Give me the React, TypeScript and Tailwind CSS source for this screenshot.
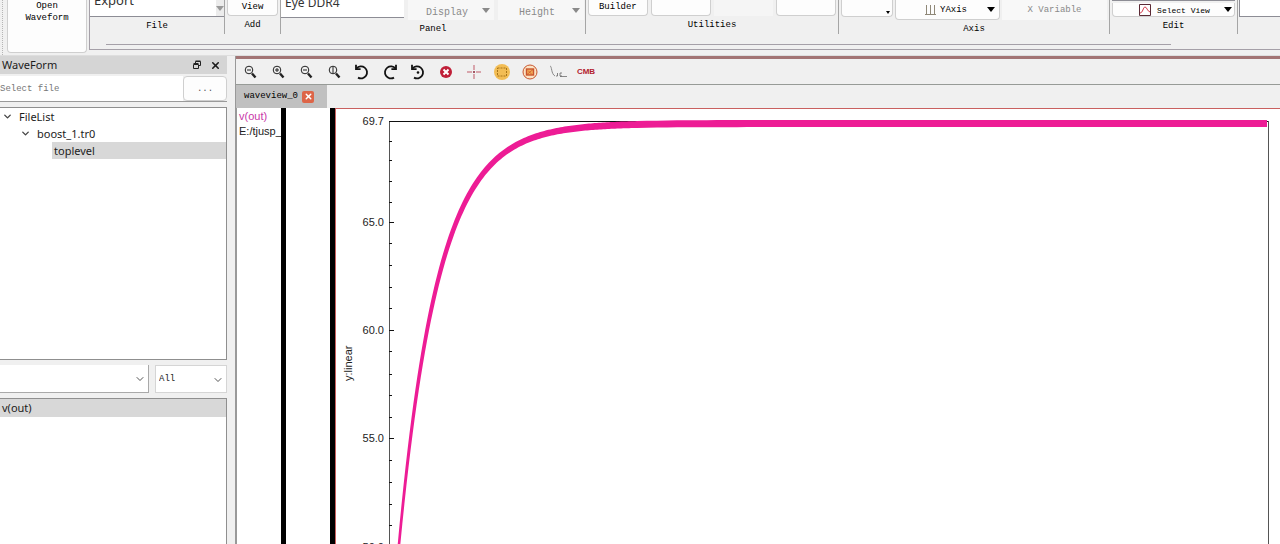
import type { ReactNode } from "react";
import { ChevronDown, X } from "lucide-react";

const MINOR_TICKS = [32, 51, 72, 93, 134, 156, 178, 199, 242, 265, 286, 308, 351, 373, 395, 416];

const MAJOR_TICKS = [
  { y: 12, label: "69.7" },
  { y: 113, label: "65.0" },
  { y: 221, label: "60.0" },
  { y: 329, label: "55.0" },
  { y: 438, label: "50.0" },
];

// Output voltage settling to its final value; the ripple band widens as it settles
const curvePath = () => {
  const upper: string[] = [];
  const lower: string[] = [];
  for (let x = 61; x <= 933; x += x < 301 ? 2 : 10) {
    const t = x - 63;
    const drop = 421 * Math.exp(-t / 39.5);
    const slope = -drop / 39.5;
    const len = Math.hypot(1, slope);
    const half = 1.3 + 2.3 * (1 - Math.exp(-Math.max(t, 0) / 90));
    const nx = (slope / len) * half;
    const ny = half / len;
    const y = 14.5 + drop;
    upper.push(`${(x + nx).toFixed(2)} ${(y - ny).toFixed(2)}`);
    lower.unshift(`${(x - nx).toFixed(2)} ${(y + ny).toFixed(2)}`);
  }
  return `M${upper.join("L")}L${lower.join("L")}Z`;
};

const CURVE = curvePath();

const Caret = ({ className = "" }: { className?: string }) => (
  <svg viewBox="0 0 8 5" className={`h-[5px] w-2 shrink-0 ${className}`} fill="currentColor">
    <path d="M0 0h8L4 5z" />
  </svg>
);

const Group = ({ label, className, children }: { label: string; className: string; children: ReactNode }) => (
  <section className={`flex h-[34px] shrink-0 flex-col border-r border-[#a5a5a5] ${className}`}>
    {children}
    <h2 className="text-center leading-[18px]">{label}</h2>
  </section>
);

const ribbonButton = "flex items-center justify-center rounded-b border border-t-0 border-[#cfcfcf] bg-[#fdfdfd]";

const Ribbon = () => (
  <header className="flex h-14 shrink-0 overflow-hidden border-b border-[#dedede] font-['Liberation_Mono',monospace] text-[9px] text-black">
    <div className="ml-0.5 w-px border-l border-dotted border-[#b5b5b5]" />
    <button className="ml-1 flex h-[53px] w-20 shrink-0 flex-col items-center rounded-b border border-t-0 border-[#cfcfcf] bg-[#fdfdfd] leading-3">
      <span>Open</span>
      <span>Waveform</span>
    </button>
    <div className="ml-0.5 flex h-[50px] min-w-0 flex-1 flex-col border-b border-l border-[#a5a0a8]">
      <div className="flex">
        <Group label="File" className="w-[135px]">
          <div className="flex h-[17px] items-end justify-between border-b border-[#8d8d95] bg-white">
            <span className="pb-2 pl-1 font-['Noto_Sans',sans-serif] text-[13px] leading-4 text-[#333]">Export</span>
            <span className="flex h-full w-2 items-center bg-[#ececec] text-[#9a9a9a]"><Caret /></span>
          </div>
        </Group>
        <Group label="Add" className="w-14">
          <button className={`${ribbonButton} mx-0.5 h-[17px]`}>View</button>
        </Group>
        <Group label="Panel" className="w-[305px]">
          <div className="flex h-5 gap-1">
            <div className="mb-0.5 flex w-[123px] items-end border-b border-[#8d8d95] bg-white pl-1">
              <span className="pb-1.5 font-['Noto_Sans',sans-serif] text-[12px] leading-4 text-[#333]">Eye DDR4</span>
            </div>
            <button disabled className="flex w-[86px] items-center justify-between bg-[#f7f7f7] pl-[18px] pr-1 text-[#8a8a8a]">
              <span className="pt-1 text-[10px]">Display</span><Caret />
            </button>
            <button disabled className="flex w-[86px] items-center justify-between bg-[#f7f7f7] pl-[21px] pr-1 text-[#8a8a8a]">
              <span className="pt-1 text-[10px]">Height</span><Caret />
            </button>
          </div>
        </Group>
        <Group label="Utilities" className="w-[253px]">
          <div className="flex h-[17px] gap-[3px] px-0.5">
            <button className={`${ribbonButton} w-[60px]`}>Builder</button>
            <button aria-label="Utility 1" className={`${ribbonButton} w-[60px]`} />
            <button disabled aria-label="Utility 2" className="w-[60px] bg-[#f5f5f5]" />
            <button aria-label="Utility 3" className={`${ribbonButton} w-[60px]`} />
          </div>
        </Group>
        <Group label="Axis" className="w-[271px]">
          <div className="flex h-5 items-start gap-0.5 px-0.5">
            <button aria-label="Axis options" className="flex h-[17px] w-[52px] items-end justify-end rounded-b border border-t-0 border-[#cfcfcf] bg-[#fdfdfd] p-0.5">
              <svg viewBox="0 0 4 3" className="h-[3px] w-1"><path d="M0 0h4L2 3z" /></svg>
            </button>
            <button className={`${ribbonButton} h-5 w-[105px] gap-1`}>
              <svg viewBox="0 0 12 12" className="ml-6 size-3" fill="#e4e0d6" stroke="#8f8878">
                <path d="M2.500 1v9M6.500 1v9M10.500 1v9M1 10.500h11" />
              </svg>
              <span className="pt-0.5">YAxis</span>
              <Caret className="ml-4" />
            </button>
            <button disabled className="h-5 flex-1 bg-[#f8f8f8] pt-0.5 text-[#8a8a8a]">X Variable</button>
          </div>
        </Group>
        <Group label="Edit" className="w-32">
          <div className="mx-0.5 flex h-[17px] flex-col border-t border-[#8d8d95]">
            <button className={`${ribbonButton} mt-0.5 h-3.5 gap-1.5 text-[8px]`}>
              <svg viewBox="0 0 12 12" className="ml-6 size-3" fill="#fff" stroke="#5b2a35">
                <path d="M.5.5h11v11H.5z" />
                <path d="M1 9c3 0 3-6 5-6s2 4 5 5" fill="none" stroke="#d43b4c" />
              </svg>
              <span className="pt-0.5">Select View</span>
              <Caret className="ml-2" />
            </button>
          </div>
        </Group>
        <div className="ml-px h-[17px] flex-1 border-b border-l border-[#8d8d95] bg-white" />
      </div>
      <hr className="ml-4 mr-[109px] mt-[10px] border-[#a5a0a8]" />
    </div>
  </header>
);

const Sidebar = () => (
  <aside className="flex w-[227px] shrink-0 flex-col font-['Noto_Sans',sans-serif] text-[11px] text-[#1c1c1c]">
    <div className="flex h-[18px] shrink-0 items-center bg-[#d5d5d5] pl-0.5 pr-1.5">
      <h2 className="flex-1">WaveForm</h2>
      <button aria-label="Float panel" className="mr-2">
        <svg viewBox="0 0 10 10" className="size-2.5" fill="none" stroke="#222">
          <path d="M3.500 3V1.500h5v4H7M1.500 4.500h5v4h-5zM1.500 3.500h5M3.500 1h5" />
        </svg>
      </button>
      <button aria-label="Close panel"><X size={11} strokeWidth={3.500} /></button>
    </div>
    <div className="mt-0.5 flex h-[26px] shrink-0 border-b border-[#9a9a9a]">
      <input
        aria-label="Select file"
        placeholder="Select file"
        className="min-w-0 flex-1 bg-white pt-0.5 font-['Liberation_Mono',monospace] text-[9px] placeholder:text-[#777]"
      />
      <button className="w-11 rounded border border-[#cfcfcf] bg-[#fdfdfd] pt-0.5 font-['Liberation_Mono',monospace] text-[9px] text-[#555]">...</button>
    </div>
    <ul className="mt-[5px] h-[253px] shrink-0 border border-l-0 border-[#8f8f8f] bg-white leading-[17px]">
      <li className="flex items-center gap-1.5 pl-0.5"><ChevronDown size={11} strokeWidth={3} className="text-[#444]" />FileList</li>
      <li className="flex items-center gap-1.5 pl-5"><ChevronDown size={11} strokeWidth={3} className="text-[#444]" />boost_1.tr0</li>
      <li className="ml-[52px] bg-[#d8d8d8] pl-0.5">toplevel</li>
    </ul>
    <div className="mt-[5px] flex h-7 shrink-0 gap-1.5 font-['Liberation_Mono',monospace] text-[9px]">
      <div className="relative min-w-0 flex-1 border-b border-r border-[#a9a9a9] bg-white">
        <select aria-label="Signal filter" className="size-full appearance-none pl-1"><option></option></select>
        <ChevronDown size={12} strokeWidth={1.500} className="pointer-events-none absolute right-0.5 top-2" />
      </div>
      <div className="relative w-[72px] border border-[#d5d5d5] bg-white">
        <select aria-label="Signal type" className="size-full appearance-none pl-[3px] pt-0.5"><option>All</option></select>
        <ChevronDown size={12} strokeWidth={1.500} className="pointer-events-none absolute right-0.5 top-2" />
      </div>
    </div>
    <ul className="mt-[5px] flex-1 border border-b-0 border-l-0 border-[#8f8f8f] bg-white">
      <li className="bg-[#d8d8d8] pl-0.5 leading-[18px]">v(out)</li>
    </ul>
  </aside>
);

const Magnifier = ({ mark }: { mark: string }) => (
  <svg viewBox="0 0 16 16" className="size-4" fill="none" stroke="#222">
    <circle cx="7" cy="6" r="3.800" />
    <path d={mark} strokeWidth="1" />
    <path d="M10 9.500l3.500 4" strokeWidth="2.400" />
  </svg>
);

const TurnArrow = ({ flip = false, dot = false }: { flip?: boolean; dot?: boolean }) => (
  <svg viewBox="0 0 18 18" className="size-[18px]" fill="none" stroke="#111" strokeWidth="1.800">
    <g transform={flip ? "translate(18 0) scale(-1 1)" : undefined}>
      <path d="M3.500 5.500A6 6 0 1 1 5 14.600" />
      <path d="M3 1.800v4.400h4.600" />
    </g>
    {dot && <circle cx="9" cy="9.500" r="1.300" fill="#111" stroke="none" />}
  </svg>
);

const TOOLS: { label: string; icon: ReactNode }[] = [
  { label: "Zoom out", icon: <Magnifier mark="M5 6h4" /> },
  { label: "Zoom in", icon: <Magnifier mark="M5 6h4M7 4v4" /> },
  { label: "Zoom out horizontally", icon: <Magnifier mark="M5 6h4" /> },
  { label: "Zoom vertically", icon: <Magnifier mark="M7 3v6" /> },
  { label: "Undo", icon: <TurnArrow /> },
  { label: "Redo", icon: <TurnArrow flip /> },
  { label: "Reset", icon: <TurnArrow dot /> },
  {
    label: "Delete",
    icon: (
      <svg viewBox="0 0 16 16" className="size-4">
        <circle cx="8" cy="8" r="6" fill="#c01f38" />
        <path d="M5.500 5.500l5 5m0-5l-5 5" stroke="#fff" strokeWidth="2" />
      </svg>
    ),
  },
  {
    label: "Cursor",
    icon: (
      <svg viewBox="0 0 16 16" className="size-4" fill="none" stroke="#c05a68">
        <path d="M8 1v5M8 10v5M1 8h5M10 8h5" />
        <path d="M7 8h2M8 7v2" stroke="#8a2335" />
      </svg>
    ),
  },
  {
    label: "Select area",
    icon: (
      <svg viewBox="0 0 18 18" className="size-[18px]">
        <circle cx="9" cy="9" r="8" fill="#f2bd55" />
        <rect x="4.500" y="5" width="9" height="8" fill="none" stroke="#a87518" strokeDasharray="2 1" />
      </svg>
    ),
  },
  {
    label: "Clear area",
    icon: (
      <svg viewBox="0 0 16 16" className="size-4" fill="none" stroke="#c9562f">
        <circle cx="8" cy="8" r="7" fill="#fbe3c4" />
        <rect x="4.500" y="5" width="7" height="6" fill="#f4ab55" strokeWidth="1.400" />
        <path d="M5 10.500l6-5M6 6.500l4 4" strokeWidth=".8" />
      </svg>
    ),
  },
  {
    label: "Corner",
    icon: (
      <svg viewBox="0 0 18 16" className="h-4 w-[18px]" fill="none" stroke="#888">
        <path d="M1 2c2 0 1 8 5 10M11 12.500h7" />
        <path d="M7 12h1.500v-3M13 9h-2v3h2" stroke="#666" strokeWidth=".8" />
      </svg>
    ),
  },
  {
    label: "CMB",
    icon: <span className="font-['Liberation_Sans',sans-serif] text-[8px] font-black text-[#b3202e]">CMB</span>,
  },
];

const Plot = () => (
  <svg
    viewBox="0 0 944 435"
    preserveAspectRatio="xMinYMin slice"
    className="h-full w-full font-['Liberation_Sans',sans-serif] text-[11px]"
    role="img"
    aria-label="v(out) waveform"
  >
    <g stroke="#111" fill="none" shapeRendering="crispEdges">
      <path d="M53.500 12v430" stroke="#555" />
      <path d="M53 12.500h880" />
      <path d="M932.500 12v430" stroke="#555" />
      {MINOR_TICKS.map((y) => <path key={y} d={`M53 ${y + 0.5}h3`} />)}
      {MAJOR_TICKS.map(({ y }) => <path key={y} d={`M53 ${y + 0.5}h5`} />)}
    </g>
    <g fill="#222" textAnchor="end">
      {MAJOR_TICKS.map(({ y, label }) => <text key={label} x="48" y={y + 4}>{label}</text>)}
    </g>
    <text transform="translate(16 272) rotate(-90)" fill="#222">y:linear</text>
    <path d={CURVE} fill="#ed1c95" />
  </svg>
);

const WaveView = () => (
  <main className="ml-2 flex min-w-0 flex-1 flex-col border-l border-[#999]">
    <div className="h-[3px] shrink-0 bg-[#a27474]" />
    <div className="flex h-[26px] shrink-0 items-center border-b border-[#979b97] pt-px">
      {TOOLS.map(({ label, icon }) => (
        <button key={label} aria-label={label} className="flex h-6 w-7 items-center justify-center">{icon}</button>
      ))}
    </div>
    <div className="flex h-[23px] shrink-0">
      <div className="flex w-[91px] items-center gap-1 bg-[#c0c0c0] pl-2 font-['Liberation_Mono',monospace] text-[9px] text-black">
        <span>waveview_0</span>
        <button aria-label="Close waveview_0" className="flex size-3 items-center justify-center rounded-xs bg-[#dd6548]">
          <X size={9} strokeWidth={4} color="#fff" />
        </button>
      </div>
    </div>
    <div className="flex min-h-0 flex-1 bg-white">
      <div className="w-[45px] shrink-0 overflow-hidden border-l border-[#999] pl-0.5 pt-px font-['Liberation_Sans',sans-serif] text-[11px] leading-[15px] whitespace-nowrap">
        <p className="text-[#c936a8]">v(out)</p>
        <p className="text-[#222]">E:/tjusp_</p>
      </div>
      <div className="w-[5px] shrink-0 bg-black" />
      <div className="w-11 shrink-0" />
      <div className="w-[5px] shrink-0 bg-black" />
      <div className="min-w-0 flex-1 border-l border-t border-[#c9605f]">
        <Plot />
      </div>
    </div>
  </main>
);

export default function App() {
  return (
    <div className="flex h-screen flex-col overflow-hidden bg-[#f0f0f0]">
      <Ribbon />
      <div className="flex min-h-0 flex-1">
        <Sidebar />
        <WaveView />
      </div>
    </div>
  );
}
